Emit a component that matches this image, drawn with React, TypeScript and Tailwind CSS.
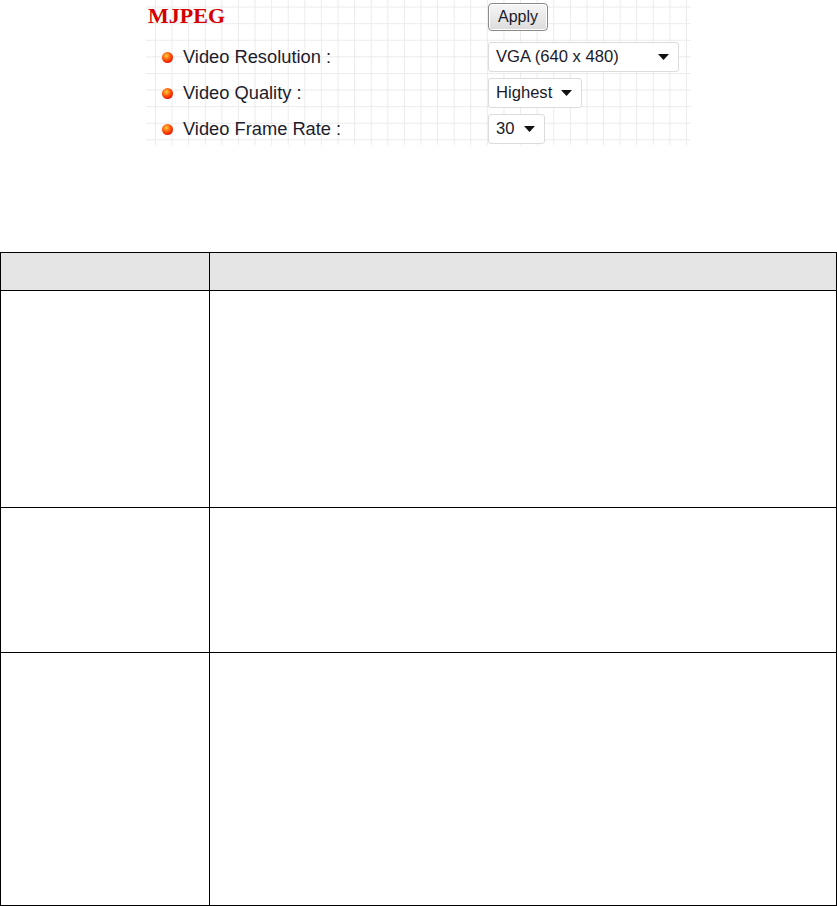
const rows = [
  { label: "Video Resolution :", value: "VGA (640 x 480)", w: "w-[191px]" },
  { label: "Video Quality :", value: "Highest", w: "w-[94px]" },
  { label: "Video Frame Rate :", value: "30", w: "w-[57px]" },
];

function Ball() {
  return (
    <span className="inline-block w-[11px] h-[11px] rounded-full bg-[radial-gradient(circle_at_40%_35%,#ffd23a_0%,#ff5a0a_40%,#e81000_75%,#a80000_100%)]" />
  );
}

function Arrow() {
  return (
    <svg width="11" height="6" viewBox="0 0 11 6">
      <path d="M0 0 L11 0 L5.5 6 Z" fill="#111" />
    </svg>
  );
}

export default function App() {
  return (
    <div className="w-[837px] h-[906px] bg-white font-['Liberation_Sans',Arial,sans-serif]">
      <div className="ml-[146px] w-[545px] h-[145px] bg-[linear-gradient(to_right,#ebebeb_1px,transparent_1px),linear-gradient(to_bottom,#ebebeb_1px,transparent_1px)] bg-size-[16.6px_16.6px] bg-position-[9px_6.6px]">
        <div className="flex items-start h-[39px]">
          <div className="w-[342px] pl-[2px] pt-[3px] font-['Liberation_Serif',serif] font-bold text-[22px] leading-[26px] text-[#d40000]">
            MJPEG
          </div>
          <button className="mt-[3px] h-[28px] w-[60px] rounded-[4px] border border-[#8a8a8a] bg-[linear-gradient(#f6f6f6,#dcdcdc)] text-[16px] text-[#1a1a2a] shadow-[inset_0_0_0_1px_#fff]">
            Apply
          </button>
        </div>
        {rows.map((r, i) => (
          <div key={i} className="flex items-center h-[36px]">
            <div className="w-[342px] flex items-center pl-[16px] gap-[10px] text-[18.3px] text-[#1c1c2c]">
              <Ball />
              <span>{r.label}</span>
            </div>
            <div className={`${r.w} h-[30px] flex items-center justify-between pl-[7px] pr-[9px] bg-white border border-[#dcdcdc] rounded-[3px] text-[16.6px] text-[#1a1a2a]`}>
              <span>{r.value}</span>
              <Arrow />
            </div>
          </div>
        ))}
      </div>

      <table className="mt-[107px] w-[837px] border-collapse">
        <tbody>
          <tr className="h-[38px] bg-[#e5e5e5]">
            <td className="w-[209px] border border-black"></td>
            <td className="border border-black"></td>
          </tr>
          <tr className="h-[217px]">
            <td className="border border-black"></td>
            <td className="border border-black"></td>
          </tr>
          <tr className="h-[145px]">
            <td className="border border-black"></td>
            <td className="border border-black"></td>
          </tr>
          <tr className="h-[253px]">
            <td className="border border-black"></td>
            <td className="border border-black"></td>
          </tr>
        </tbody>
      </table>
    </div>
  );
}
